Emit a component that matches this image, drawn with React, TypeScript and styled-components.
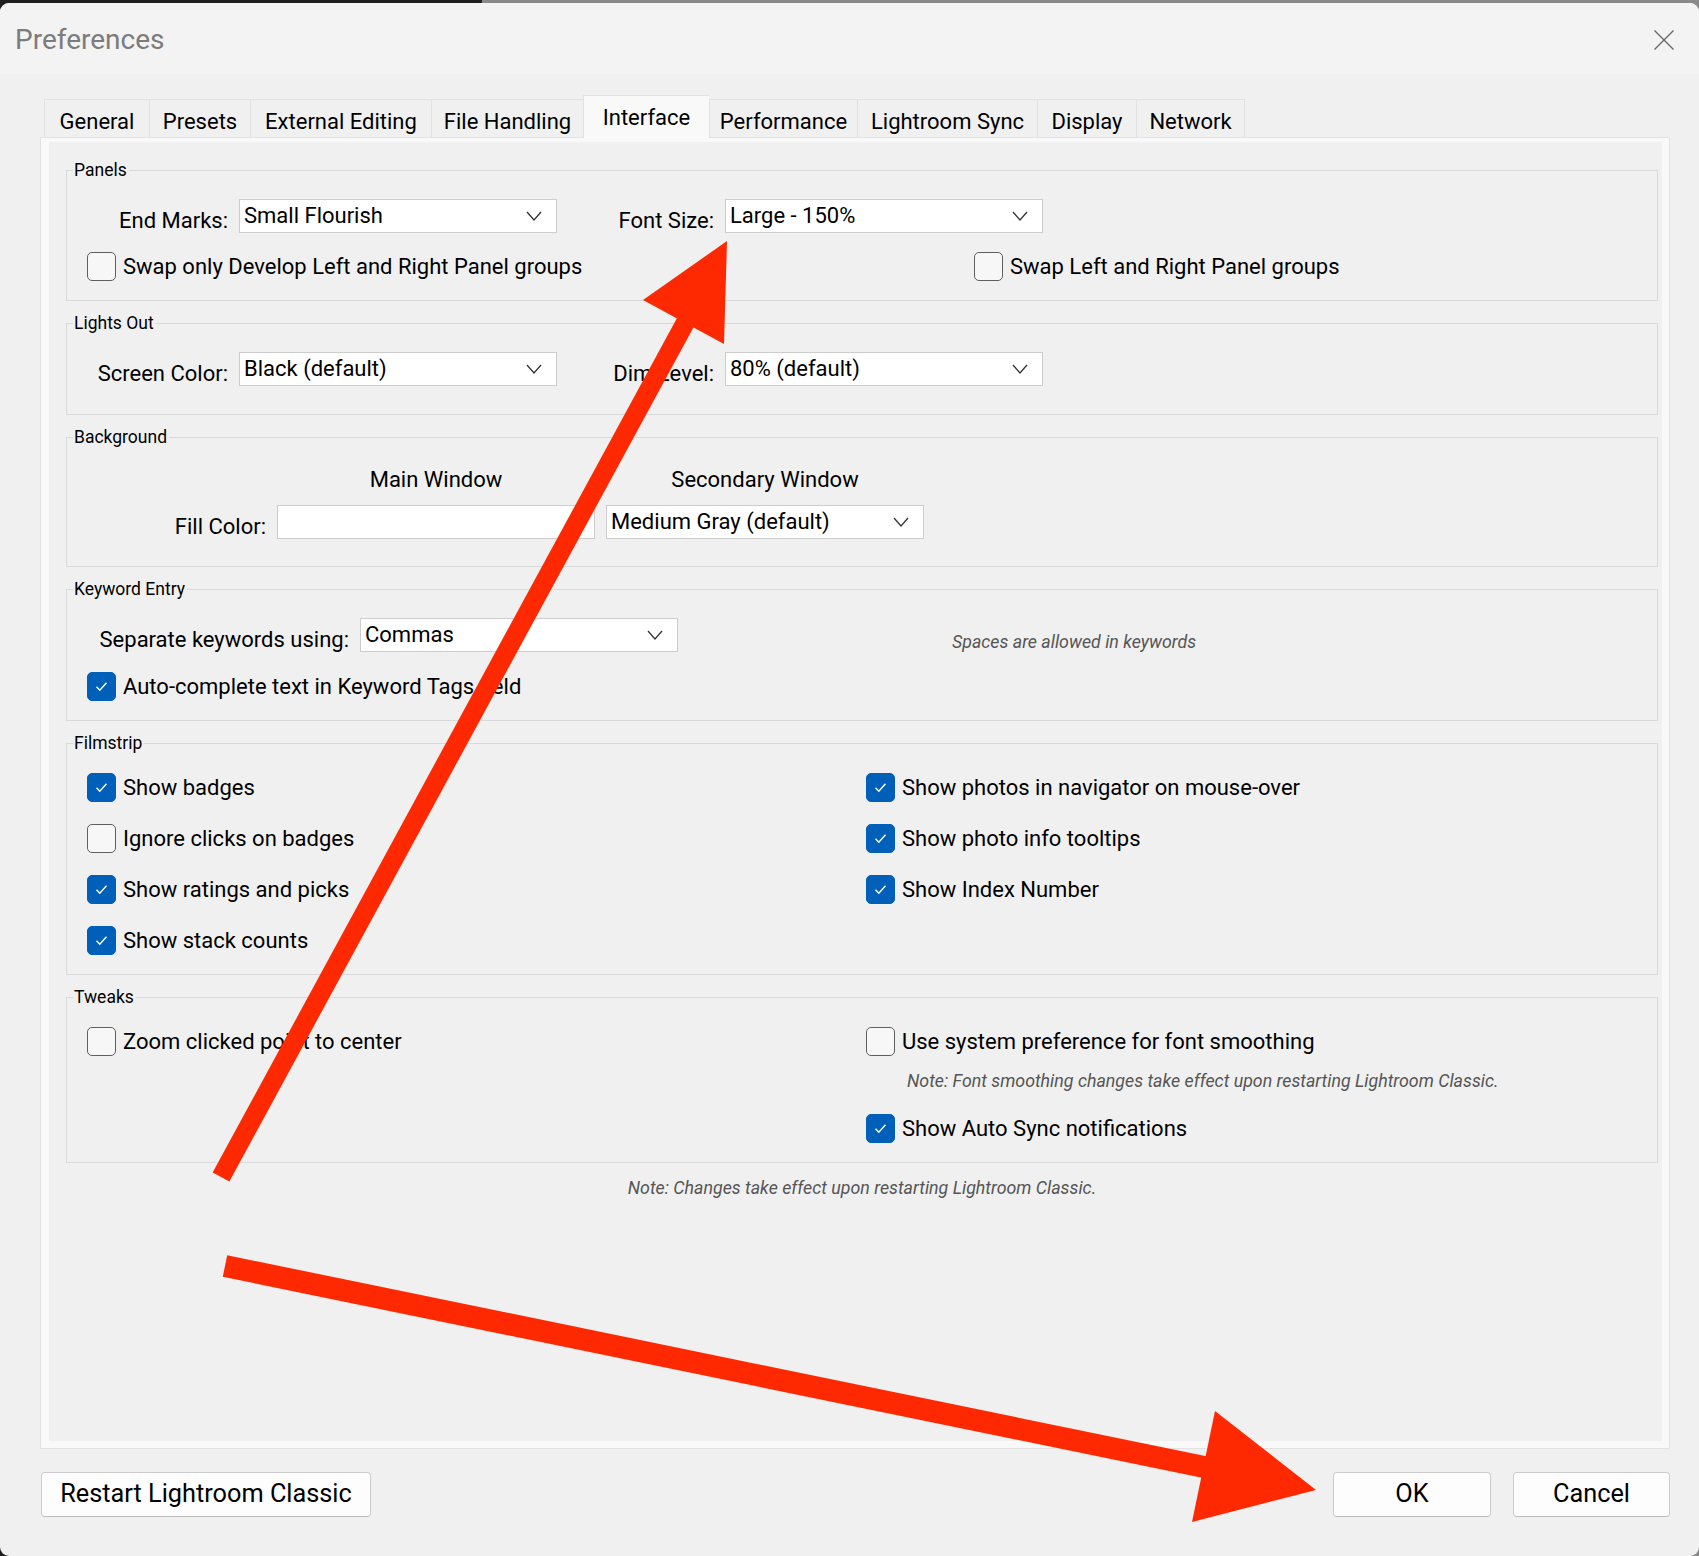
import React from 'react';
import styled, { createGlobalStyle } from 'styled-components';

const Global = createGlobalStyle`
  html, body { margin: 0; padding: 0; }
  body {
    width: 1699px;
    height: 1556px;
    overflow: hidden;
    background: linear-gradient(to right, #1f1f1f 0 482px, #8a8a8a 482px);
    font-family: Roboto, "Liberation Sans", "DejaVu Sans", sans-serif;
    color: #000;
  }
  * { box-sizing: border-box; }
`;

const Root = styled.div`
  position: relative;
  width: 1699px;
  height: 1556px;
`;

const Window = styled.div`
  margin-top: 3px;
  width: 1699px;
  height: 1553px;
  background: #f0f0f0;
  border-radius: 9px;
  overflow: hidden;
  display: flex;
  flex-direction: column;
`;

const TitleBar = styled.div`
  height: 71px;
  flex-shrink: 0;
  background: #f3f3f3;
  display: flex;
  align-items: center;
  justify-content: space-between;
  padding: 3px 24px 0 15px;
`;

const Title = styled.div`
  font-size: 28px;
  color: #7c7c7c;
  line-height: 34px;
`;

const Body = styled.div`
  padding: 0 29px 0 40px;
  display: flex;
  flex-direction: column;
`;

const TabStrip = styled.div`
  margin: 21px 0 0 4px;
  height: 42px;
  display: flex;
  align-items: flex-end;
`;

const Tab = styled.div<{ $active?: boolean; $w: number }>`
  width: ${p => p.$w}px;
  height: ${p => (p.$active ? 43 : 38)}px;
  margin-bottom: ${p => (p.$active ? -1 : 0)}px;
  padding-top: ${p => (p.$active ? 0 : 5)}px;
  display: flex;
  align-items: center;
  justify-content: center;
  font-size: 22px;
  color: #000;
  white-space: nowrap;
  background: ${p => (p.$active ? '#f9f9f9' : '#f0f0f0')};
  border: 1px solid #e1e1e1;
  border-bottom: none;
  border-right: none;
  position: relative;
  z-index: ${p => (p.$active ? 3 : 0)};
  &:last-child { border-right: 1px solid #e1e1e1; }
`;

const Pane = styled.div`
  position: relative;
  z-index: 1;
  height: 1312px;
  background: #f9f9f9;
  border: 1px solid #e2e2e2;
  padding: 4px 7px 7px 8px;
`;

const PaneInner = styled.div`
  height: 100%;
  background: #f0f0f0;
  padding: 18px 4px 0 17px;
  display: flex;
  flex-direction: column;
  gap: 12px;
`;

const Group = styled.fieldset<{ $pt: number; $pb: number }>`
  margin: 0;
  min-width: 0;
  border: 1px solid #d9d9d9;
  padding: ${p => p.$pt}px 0 ${p => p.$pb}px 0;
`;

const Legend = styled.legend`
  margin-left: 6px;
  padding: 0 2px 0 1px;
  font-size: 17.5px;
  line-height: 20px;
  color: #000;
`;

const FieldGrid = styled.div<{ $cols: string; $mt?: number }>`
  display: grid;
  grid-template-columns: ${p => p.$cols};
  column-gap: 11px;
  align-items: center;
  margin-left: 20px;
  margin-top: ${p => p.$mt ?? 0}px;
`;

const Label = styled.div`
  text-align: right;
  padding-top: 10px;
  line-height: 24px;
  font-size: 22px;
  white-space: nowrap;
`;

const ColHead = styled.div`
  text-align: center;
  font-size: 22px;
  line-height: 26px;
`;

const Select = styled.div`
  height: 34px;
  background: #fff;
  border: 1px solid #cdcdcd;
  display: flex;
  align-items: center;
  justify-content: space-between;
  padding: 0 14px 1px 4px;
  font-size: 22px;
  white-space: nowrap;
`;

const FillBox = styled.div`
  height: 34px;
  background: #fff;
  border: 1px solid #cdcdcd;
`;

const CheckGrid = styled.div<{ $cols: string; $mt?: number; $rowGap?: number }>`
  display: grid;
  grid-template-columns: ${p => p.$cols};
  row-gap: ${p => p.$rowGap ?? 0}px;
  margin-left: 20px;
  margin-top: ${p => p.$mt ?? 0}px;
`;

const CheckRow = styled.div`
  display: flex;
  align-items: center;
  gap: 7px;
  height: 29px;
  font-size: 22px;
  white-space: nowrap;
`;

const Box = styled.span<{ $checked: boolean }>`
  width: 29px;
  height: 29px;
  flex-shrink: 0;
  border-radius: 5px;
  border: 1px solid ${p => (p.$checked ? '#005fb8' : '#5f5f5f')};
  background: ${p => (p.$checked ? '#005fb8' : '#f7f7f7')};
  display: flex;
  align-items: center;
  justify-content: center;
`;

const Note = styled.div<{ $pl?: number; $mt?: number }>`
  font-style: italic;
  font-size: 17.8px;
  line-height: 20px;
  color: #555;
  white-space: nowrap;
  padding-left: ${p => p.$pl ?? 0}px;
  margin-top: ${p => p.$mt ?? 0}px;
`;

const CenterNote = styled(Note)`
  text-align: center;
  margin-top: 3px;
`;

const Columns = styled.div`
  display: flex;
  margin-left: 20px;
`;

const Column = styled.div<{ $w?: number }>`
  display: flex;
  flex-direction: column;
  width: ${p => (p.$w ? `${p.$w}px` : 'auto')};
`;

const Spacer = styled.div<{ $h: number }>`
  height: ${p => p.$h}px;
`;

const Footer = styled.div`
  margin-top: 23px;
  padding-left: 1px;
  display: flex;
  align-items: center;
`;

const Button = styled.button<{ $w: number }>`
  width: ${p => p.$w}px;
  height: 45px;
  background: #fdfdfd;
  border: 1px solid #cccccc;
  border-bottom-color: #bdbdbd;
  border-radius: 4px;
  font-family: inherit;
  font-size: 25.3px;
  color: #000;
  padding: 0 0 2px;
`;

const FooterGap = styled.div`
  flex: 1;
`;

const ButtonGroup = styled.div`
  display: flex;
  gap: 22px;
`;

const Overlay = styled.svg`
  position: absolute;
  top: 0;
  left: 0;
  width: 1699px;
  height: 1556px;
  pointer-events: none;
  z-index: 10;
`;

const Chevron = () => (
  <svg width="16" height="10" viewBox="0 0 16 10">
    <path d="M1 1 L8 9 L15 1" fill="none" stroke="#333" strokeWidth="1.3" />
  </svg>
);

const CloseIcon = () => (
  <svg width="22" height="22" viewBox="0 0 22 22">
    <path d="M1.5 1.5 L20.5 20.5 M20.5 1.5 L1.5 20.5" stroke="#6a6a6a" strokeWidth="1.4" fill="none" />
  </svg>
);

const Checkbox = ({ checked, label }: { checked?: boolean; label: string }) => (
  <CheckRow>
    <Box $checked={!!checked}>
      {checked && (
        <svg width="13" height="11" viewBox="0 0 13 11">
          <path d="M1.5 5.8 L4.8 9.2 L11.5 1.8" fill="none" stroke="#fff" strokeWidth="1.4" />
        </svg>
      )}
    </Box>
    <span>{label}</span>
  </CheckRow>
);

const Dropdown = ({ value }: { value: string }) => (
  <Select>
    <span>{value}</span>
    <Chevron />
  </Select>
);

const tabs: { name: string; w: number; active?: boolean }[] = [
  { name: 'General', w: 105 },
  { name: 'Presets', w: 101 },
  { name: 'External Editing', w: 181 },
  { name: 'File Handling', w: 152 },
  { name: 'Interface', w: 126, active: true },
  { name: 'Performance', w: 148 },
  { name: 'Lightroom Sync', w: 180 },
  { name: 'Display', w: 99 },
  { name: 'Network', w: 109 },
];

const ROW_COLS = '141px 318px 146px 318px';

export default function App() {
  return (
    <Root>
      <Global />
      <Window>
        <TitleBar>
          <Title>Preferences</Title>
          <CloseIcon />
        </TitleBar>
        <Body>
          <TabStrip>
            {tabs.map(t => (
              <Tab key={t.name} $w={t.w} $active={t.active}>
                {t.name}
              </Tab>
            ))}
          </TabStrip>
          <Pane>
            <PaneInner>
              <Group $pt={19} $pb={19}>
                <Legend>Panels</Legend>
                <FieldGrid $cols={ROW_COLS}>
                  <Label>End Marks:</Label>
                  <Dropdown value="Small Flourish" />
                  <Label>Font Size:</Label>
                  <Dropdown value="Large - 150%" />
                </FieldGrid>
                <CheckGrid $cols="887px auto" $mt={19}>
                  <Checkbox label="Swap only Develop Left and Right Panel groups" />
                  <Checkbox label="Swap Left and Right Panel groups" />
                </CheckGrid>
              </Group>

              <Group $pt={19} $pb={28}>
                <Legend>Lights Out</Legend>
                <FieldGrid $cols={ROW_COLS}>
                  <Label>Screen Color:</Label>
                  <Dropdown value="Black (default)" />
                  <Label>Dim Level:</Label>
                  <Dropdown value="80% (default)" />
                </FieldGrid>
              </Group>

              <Group $pt={20} $pb={27}>
                <Legend>Background</Legend>
                <FieldGrid $cols="179px 318px 318px">
                  <div />
                  <ColHead>Main Window</ColHead>
                  <ColHead>Secondary Window</ColHead>
                </FieldGrid>
                <FieldGrid $cols="179px 318px 318px" $mt={12}>
                  <Label>Fill Color:</Label>
                  <FillBox />
                  <Dropdown value="Medium Gray (default)" />
                </FieldGrid>
              </Group>

              <Group $pt={19} $pb={19}>
                <Legend>Keyword Entry</Legend>
                <FieldGrid $cols="262px 318px auto">
                  <Label>Separate keywords using:</Label>
                  <Dropdown value="Commas" />
                  <Note $pl={263} $mt={14}>Spaces are allowed in keywords</Note>
                </FieldGrid>
                <CheckGrid $cols="auto" $mt={20}>
                  <Checkbox checked label="Auto-complete text in Keyword Tags field" />
                </CheckGrid>
              </Group>

              <Group $pt={20} $pb={19}>
                <Legend>Filmstrip</Legend>
                <CheckGrid $cols="779px auto" $rowGap={22}>
                  <Checkbox checked label="Show badges" />
                  <Checkbox checked label="Show photos in navigator on mouse-over" />
                  <Checkbox label="Ignore clicks on badges" />
                  <Checkbox checked label="Show photo info tooltips" />
                  <Checkbox checked label="Show ratings and picks" />
                  <Checkbox checked label="Show Index Number" />
                  <Checkbox checked label="Show stack counts" />
                  <div />
                </CheckGrid>
              </Group>

              <Group $pt={20} $pb={19}>
                <Legend>Tweaks</Legend>
                <Columns>
                  <Column $w={779}>
                    <Checkbox label="Zoom clicked point to center" />
                  </Column>
                  <Column>
                    <Checkbox label="Use system preference for font smoothing" />
                    <Note $pl={41} $mt={15}>
                      Note: Font smoothing changes take effect upon restarting Lightroom Classic.
                    </Note>
                    <Spacer $h={23} />
                    <Checkbox checked label="Show Auto Sync notifications" />
                  </Column>
                </Columns>
              </Group>

              <CenterNote>Note: Changes take effect upon restarting Lightroom Classic.</CenterNote>
            </PaneInner>
          </Pane>
          <Footer>
            <Button $w={330}>Restart Lightroom Classic</Button>
            <FooterGap />
            <ButtonGroup>
              <Button $w={158}>OK</Button>
              <Button $w={157}>Cancel</Button>
            </ButtonGroup>
          </Footer>
        </Body>
      </Window>
      <Overlay viewBox="0 0 1699 1556">
        <line x1="221" y1="1174" x2="690" y2="311" stroke="#fe2900" strokeWidth="19" />
        <polygon points="727,238 643,297 724,341" fill="#fe2900" />
        <line x1="225" y1="1263" x2="1214" y2="1466" stroke="#fe2900" strokeWidth="22" />
        <polygon points="1215,1408 1316,1487 1192,1519" fill="#fe2900" />
      </Overlay>
    </Root>
  );
}
